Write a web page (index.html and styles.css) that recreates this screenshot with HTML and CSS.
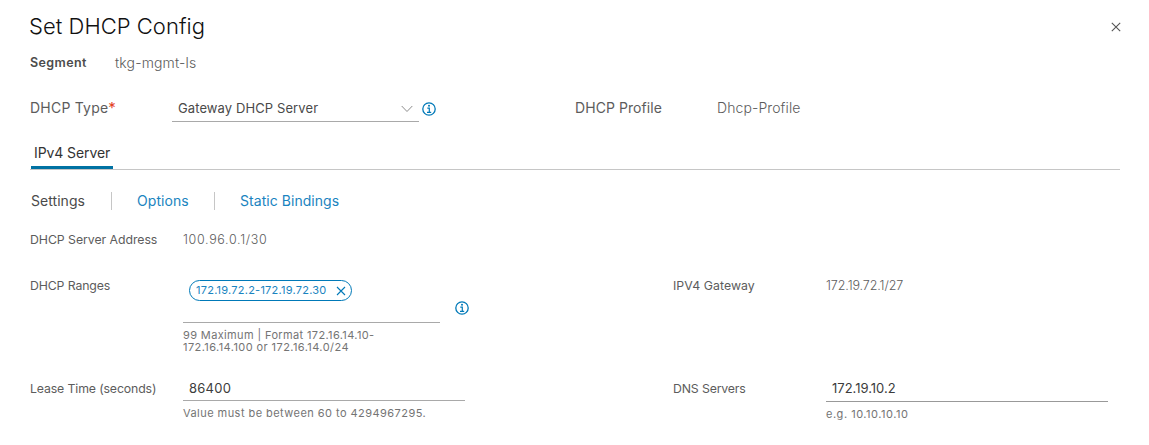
FILE: index.html
```html
<!DOCTYPE html>
<html lang="en">
<head>
<meta charset="utf-8">
<title>Set DHCP Config</title>
<link rel="stylesheet" href="styles.css">
</head>
<body>
<main class="dialog">
  <header class="dialog-header">
    <h1 class="title"><span>Set DHCP Config</span></h1>
    <svg class="close" viewBox="0 0 10 10" width="10" height="10"><path d="M.8.8 9.2 9.2M9.2.8.8 9.2" fill="none" stroke="#555" stroke-width="1.1"/></svg>
  </header>
  <div class="segment">
    <span class="segment-label">Segment</span>
    <span class="segment-value">tkg-mgmt-ls</span>
  </div>
  <div class="type-row">
    <div class="type-label"><span class="type-text">DHCP Type</span><span class="required">*</span></div>
    <div class="select">
      <span class="select-value">Gateway DHCP Server</span>
      <svg class="chevron" viewBox="0 0 12 8" width="12" height="8"><path d="M.7 1 6 6.500 11.300 1" fill="none" stroke="#8c8c8c" stroke-width="1"/></svg>
    </div>
    <svg class="info" viewBox="0 0 14 14" width="14" height="14"><circle cx="7" cy="7" r="6.200" fill="none" stroke="#0079b8" stroke-width="1.300"/><path d="M5.300 6.200H7.300V10M5 10.300H9.200" fill="none" stroke="#0079b8" stroke-width="1.200"/><circle cx="7" cy="3.800" r="1" fill="#0079b8"/></svg>
    <span class="profile-label">DHCP Profile</span>
    <span class="profile-value">Dhcp-Profile</span>
  </div>
  <div class="tabs"><div class="tab"><span class="tab-text">IPv4 Server</span></div></div>
  <nav class="subnav">
    <span class="subnav-item settings">Settings</span>
    <span class="subnav-item link options">Options</span>
    <span class="subnav-item link static">Static Bindings</span>
  </nav>
  <div class="address-row">
    <span class="label address-label">DHCP Server Address</span>
    <span class="value address-value">100.96.0.1/30</span>
  </div>
  <div class="grid ranges-row">
    <div class="label"><span class="ranges-label">DHCP Ranges</span></div>
    <div class="ranges">
      <div class="chip-field">
        <span class="chip"><span class="chip-text">172.19.72.2-172.19.72.30</span><svg class="chip-close" viewBox="0 0 10 10" width="10" height="10"><path d="M1 1 9 9M9 1 1 9" fill="none" stroke="#0079b8" stroke-width="1.100"/></svg></span>
      </div>
      <div class="hint ranges-hint"><span class="hint-one">99 Maximum | Format 172.16.14.10-</span><br><span class="hint-two">172.16.14.100 or 172.16.14.0/24</span></div>
    </div>
    <svg class="info ranges-info" viewBox="0 0 14 14" width="14" height="14"><circle cx="7" cy="7" r="6.200" fill="none" stroke="#0079b8" stroke-width="1.300"/><path d="M5.300 6.200H7.300V10M5 10.300H9.200" fill="none" stroke="#0079b8" stroke-width="1.200"/><circle cx="7" cy="3.800" r="1" fill="#0079b8"/></svg>
    <div class="label"><span class="gateway-label">IPV4 Gateway</span></div>
    <div class="value"><span class="gateway-value">172.19.72.1/27</span></div>
  </div>
  <div class="grid lease-row">
    <div class="label"><span class="lease-label">Lease Time (seconds)</span></div>
    <div class="field">
      <div class="input"><span class="lease-value">86400</span></div>
      <div class="hint"><span class="lease-hint">Value must be between 60 to 4294967295.</span></div>
    </div>
    <div class="label dns-cell"><span class="dns-label">DNS Servers</span></div>
    <div class="field">
      <div class="input dns-input"><span class="dns-value">172.19.10.2</span></div>
      <div class="hint"><span class="dns-hint">e.g. 10.10.10.10</span></div>
    </div>
  </div>
</main>
</body>
</html>
```

FILE: styles.css
```css
* { box-sizing: border-box; }
body {
  margin: 0;
  background: #fff;
  color: #5c5c5c;
  font-family: Inter, "Open Sans", sans-serif;
  font-size: 13px;
  white-space: nowrap;
}
svg { display: block; flex: none; }
.dialog { width: 1149px; height: 445px; padding: 10px 29px 0 30px; }
.dialog-header { display: flex; height: 34px; width: 1091px; justify-content: space-between; }
.title { margin: 0 0 0 -1px; font-size: 22px; line-height: 32px; font-weight: 300; color: #111; letter-spacing: .03px; }
.close { margin-top: 12px; }
.segment { display: flex; height: 46px; line-height: 37px; }
.segment-label { width: 85px; font-size: 12.5px; font-weight: 600; color: #4c4c4c; letter-spacing: .4px; }
.segment-value { font-size: 14px; font-weight: 300; letter-spacing: .15px; }
.type-row { display: flex; height: 50px; line-height: 36px; font-size: 14px; }
.type-label { display: flex; width: 142px; letter-spacing: .22px; }
.required { color: #e3431f; line-height: 35px; font-size: 15px; }
.select { display: flex; width: 247px; height: 32px; padding: 0 6px; border-bottom: 1px solid #a9a9a9; font-size: 13px; justify-content: space-between; color: #4a4a4a; letter-spacing: .1px; }
.chevron { margin-top: 15px; }
.type-row .info { margin: 12px 139px 0 3px; }
.profile-label { width: 142px; letter-spacing: .07px; }
.profile-value { font-weight: 300; letter-spacing: .1px; }
.tabs { height: 30px; border-bottom: 1px solid #c6c6c6; }
.tab { width: 82px; height: 29px; margin-left: 1px; padding-left: 3px; border-bottom: 3px solid #0072a3; line-height: 26px; font-size: 14px; color: #333; letter-spacing: -.1px; }
.subnav { display: flex; height: 54px; padding: 22px 0 0 1px; font-size: 14px; line-height: 18px; color: #4a4a4a; }
.subnav-item { height: 18px; letter-spacing: .05px; }
.settings { width: 80px; }
.link { color: #1a84c0; padding-left: 25px; border-left: 1px solid #c6c6c6; }
.options { width: 103px; }
.address-row { display: flex; height: 32px; line-height: 32px; }
.label { font-size: 12.300px; letter-spacing: -.05px; }
.value { font-weight: 300; font-size: 12.500px; }
.address-label { width: 153px; }
.address-value { letter-spacing: .67px; }
.grid { display: grid; grid-template-columns: 153px 490px 153px 282px; }
.ranges-row { height: 124px; grid-template-columns: 153px 257px 233px 153px 282px; padding-top: 20px; }
.ranges-row > .label, .ranges-row > .value { line-height: 20px; }
.gateway-label { letter-spacing: .04px; }
.gateway-value { letter-spacing: -.1px; }
.ranges-label { letter-spacing: -.13px; }
.chip-field { height: 47px; padding: 4px 6px 0; border-bottom: 1px solid #a9a9a9; }
.chip { display: flex; width: 163px; height: 21px; padding: 0 5px 0 6px; align-items: center; justify-content: space-between; border: 1px solid #0079b8; border-radius: 11px; color: #1a84c0; font-size: 11px; letter-spacing: .24px; }
.chip-text { line-height: 18px; height: 19px; }
.hint { font-size: 11px; line-height: 12px; letter-spacing: .45px; color: #747474; }
.hint-one { letter-spacing: .37px; }
.hint-two { letter-spacing: .42px; }
.dns-hint { letter-spacing: .52px; }
.ranges-hint { padding-top: 6px; }
.ranges-info { margin: 25px 0 0 15px; }
.lease-row > .label { line-height: 18px; }
.lease-label { letter-spacing: -.13px; }
.dns-label { letter-spacing: -.15px; }
.input { height: 21px; padding-left: 6px; border-bottom: 1px solid #a9a9a9; line-height: 17px; color: #3c3c3c; }
.lease-value { letter-spacing: .25px; }
.lease-row .hint { padding-top: 6px; }
.lease-row .field { width: 282px; }
.dns-input { height: 22px; border-color: #999; }
```
